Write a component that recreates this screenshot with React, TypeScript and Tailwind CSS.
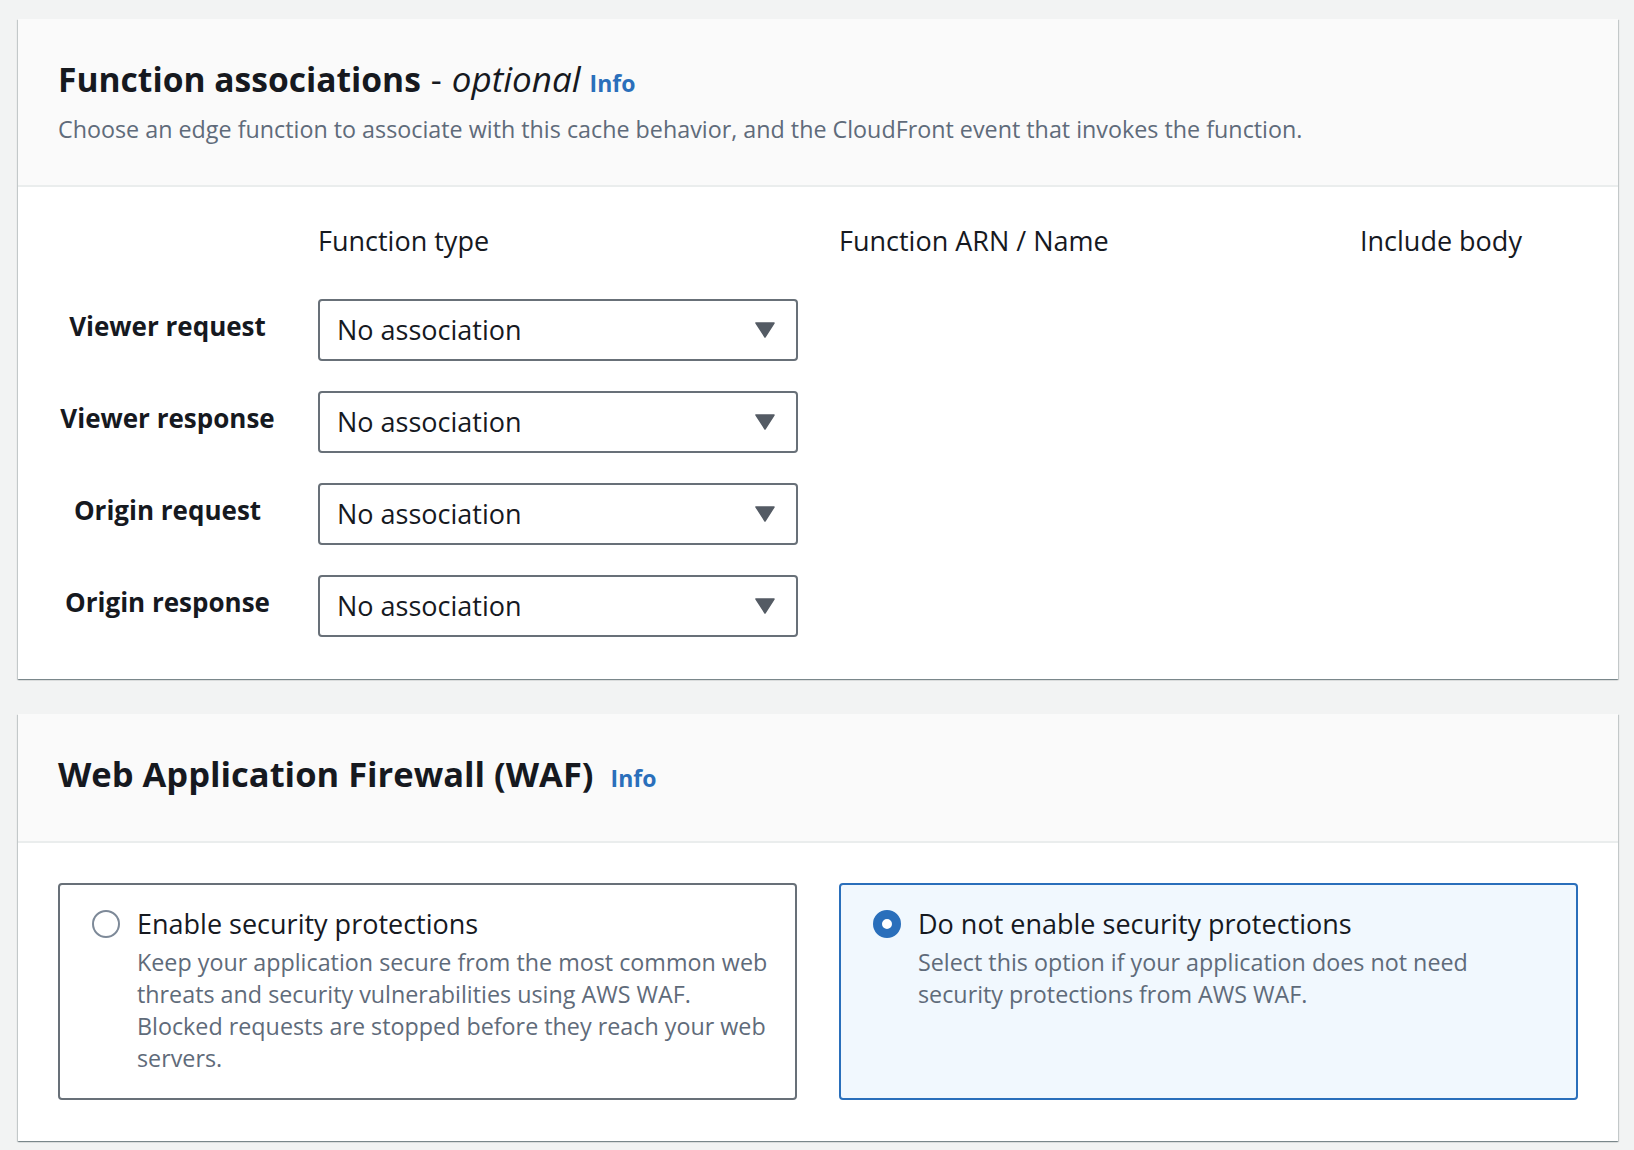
import React from "react";

const font = { fontFamily: '"Open Sans", "Noto Sans", sans-serif' };

function Arrow() {
  return (
    <svg width="20" height="16" viewBox="0 0 20 16" className="shrink-0">
      <path d="M1 1 H19 L10 15 Z" fill="#545b64" stroke="#545b64" strokeWidth="1.5" strokeLinejoin="round" />
    </svg>
  );
}

function Select() {
  return (
    <div className="h-[62px] w-[480px] border-2 border-[#687078] rounded-[4px] bg-white flex items-center justify-between pl-[17px] pr-[21px]">
      <span className="text-[27px] leading-[32px] text-[#16191f]">No association</span>
      <Arrow />
    </div>
  );
}

const rows = ["Viewer request", "Viewer response", "Origin request", "Origin response"];

function Card({ children }: { children: React.ReactNode }) {
  return (
    <div className="bg-white shadow-[0_1px_1px_0_rgba(0,28,36,0.3),1px_1px_1px_0_rgba(0,28,36,0.15),-1px_1px_1px_0_rgba(0,28,36,0.15)]">
      {children}
    </div>
  );
}

export default function App() {
  return (
    <div className="min-h-[1150px] w-full bg-[#f2f3f3] pl-[18px] pr-[16px] pt-[19px] pb-[11px]" style={font}>
      <Card>
        <div className="bg-[#fafafa] border-b-2 border-[#eaeded] px-[40px] pt-[40px] pb-[40px]">
          <div className="flex items-baseline text-[#16191f] h-[40px] leading-[40px] whitespace-nowrap">
            <span className="text-[33.6px] font-bold">Function associations</span>
            <span className="text-[34px] ml-[10px]">-</span>
            <span className="text-[35px] italic ml-[10px]">optional</span>
            <span className="text-[23px] font-bold text-[#2a6fbb] ml-[9px]">Info</span>
          </div>
          <div className="mt-[14px] text-[23.3px] leading-[32px] text-[#5f6b7a] whitespace-nowrap">
            Choose an edge function to associate with this cache behavior, and the CloudFront event that invokes the function.
          </div>
        </div>
        <div className="px-[40px] pt-[38px] pb-[42px]">
          <div className="grid grid-cols-[219px_480px_480px_1fr] gap-x-[41px] gap-y-[30px] text-[#16191f]">
            <div className="h-[32px]" />
            <div className="text-[27px] leading-[32px] whitespace-nowrap">Function type</div>
            <div className="text-[27px] leading-[32px] whitespace-nowrap">Function ARN / Name</div>
            <div className="text-[27px] leading-[32px] whitespace-nowrap">Include body</div>
            {rows.map((r, i) => (
              <React.Fragment key={r}>
                <div className={`flex items-start justify-center pt-[11px] text-[26px] font-bold leading-[32px] whitespace-nowrap ${i === 0 ? "mt-[12px]" : ""}`}>
                  {r}
                </div>
                <div className={i === 0 ? "mt-[12px]" : ""}>
                  <Select />
                </div>
                <div />
                <div />
              </React.Fragment>
            ))}
          </div>
        </div>
      </Card>

      <div className="h-[35px]" />

      <Card>
        <div className="bg-[#fafafa] border-b-2 border-[#eaeded] px-[40px] pt-[40px] pb-[47px]">
          <div className="flex items-baseline text-[#16191f] h-[40px] leading-[40px] whitespace-nowrap">
            <span className="text-[34.5px] font-bold">Web Application Firewall (WAF)</span>
            <span className="text-[23px] font-bold text-[#2a6fbb] ml-[17px]">Info</span>
          </div>
        </div>
        <div className="px-[40px] pt-[40px] pb-[41px]">
          <div className="grid grid-cols-2 gap-x-[42px]">
            <div className="border-2 border-[#687078] rounded-[4px] bg-white pl-[32px] pr-[20px] pt-[23px] pb-[24px] flex gap-[17px]">
              <div className="mt-[2px] w-[28px] h-[28px] rounded-full border-2 border-[#7d8998] bg-white shrink-0" />
              <div>
                <div className="text-[27px] leading-[32px] text-[#16191f] whitespace-nowrap">Enable security protections</div>
                <div className="mt-[6px] text-[23.3px] leading-[32px] text-[#5f6b7a]">
                  <div className="whitespace-nowrap">Keep your application secure from the most common web</div>
                  <div className="whitespace-nowrap">threats and security vulnerabilities using AWS WAF.</div>
                  <div className="whitespace-nowrap">Blocked requests are stopped before they reach your web</div>
                  <div className="whitespace-nowrap">servers.</div>
                </div>
              </div>
            </div>
            <div className="border-2 border-[#2a6fbb] rounded-[4px] bg-[#f1f8fe] pl-[32px] pr-[20px] pt-[23px] pb-[24px] flex gap-[17px]">
              <div className="mt-[2px] w-[28px] h-[28px] rounded-full border-[9px] border-[#2a6fbb] bg-white shrink-0" />
              <div>
                <div className="text-[27px] leading-[32px] text-[#16191f] whitespace-nowrap">Do not enable security protections</div>
                <div className="mt-[6px] text-[23.3px] leading-[32px] text-[#5f6b7a]">
                  <div className="whitespace-nowrap">Select this option if your application does not need</div>
                  <div className="whitespace-nowrap">security protections from AWS WAF.</div>
                </div>
              </div>
            </div>
          </div>
        </div>
      </Card>
    </div>
  );
}
